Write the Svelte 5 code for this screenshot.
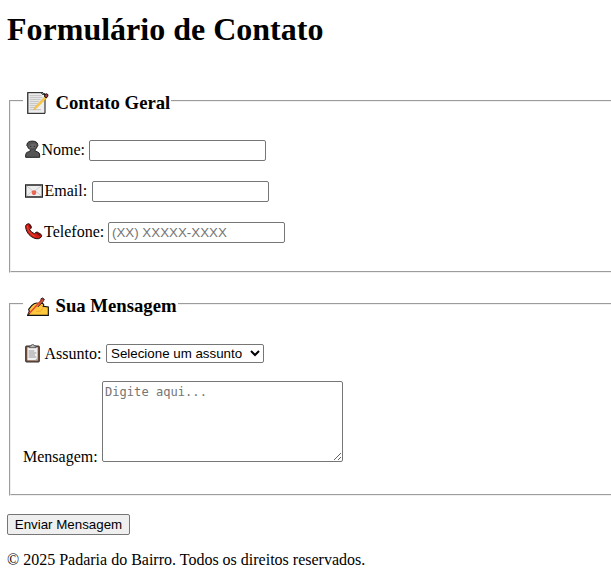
<script>
  let nome = $state('');
  let email = $state('');
  let telefone = $state('');
  let assunto = $state('');
  let mensagem = $state('');
</script>

<main>
  <h1>Formulário de Contato</h1>
  <form onsubmit={(e) => e.preventDefault()}>
    <fieldset class="geral">
      <legend>
        <svg width="22" height="22" viewBox="81 22 66 66">
          <path d="M83 24H129L135 31V86H83Z" fill="#eee" stroke="#111" stroke-width="3" />
          <path d="M83 23V87" stroke="#444" stroke-width="4" />
          <path d="M89 33H125M89 39H127M89 45H122M89 51H117M89 57H113M89 63H109M89 69H105M89 75H123" stroke="#aaa" stroke-width="2" />
          <path d="M101 76L105 67L136 34L141 39L110 70Z" fill="#ffc83d" stroke="#c99a35" stroke-width="1" />
          <path d="M124 25L130 31L136 25" fill="none" stroke="#111" stroke-width="3" />
          <path d="M133 34L139 27L144 30L143 36L138 40Z" fill="#a8454b" stroke="#111" stroke-width="3" />
        </svg>
        <span>Contato Geral</span>
      </legend>
      <div class="row">
        <svg width="16" height="19" viewBox="75 164 48 57">
          <path d="M77 216V208Q78 200 86 199L91 197V192Q84 190 83 184Q79 182 81 177C82 164 112 164 113 177Q116 182 111 184Q110 190 105 193V197L113 200Q119 202 119 209V216Z" fill="#555" stroke="#222" stroke-width="3" />
          <path d="M86 184C87 176 97 174 107 176Q111 186 103 191Q96 196 89 190Z" fill="#666" />
          <circle cx="92" cy="183" r="2" fill="#222" /><circle cx="103" cy="183" r="2" fill="#222" />
          <path d="M92 190Q97 193 103 190" fill="none" stroke="#292929" stroke-width="2" />
        </svg>
        <label class="nome" for="nome">Nome:</label>
        <input id="nome" type="text" bind:value={nome} />
      </div>
      <div class="row">
        <svg width="18" height="14" viewBox="75 56 54 42">
          <path d="M77 59H127V95H77Z" fill="#eee" stroke="#222" stroke-width="4" />
          <path d="M79 61L101 79L125 61M79 93L96 77M125 93L107 77" fill="none" stroke="#bbb" stroke-width="2" />
          <circle cx="102" cy="82" r="7" fill="#ee6b57" />
          <path d="M99 78V80M105 78V80M99 86H105" stroke="#c84b40" stroke-width="2" />
        </svg>
        <label class="email" for="email">Email:</label>
        <input id="email" type="email" bind:value={email} />
      </div>
      <div class="row">
        <svg width="18" height="17" viewBox="75 174 54 51">
          <path d="M80 178L86 176Q91 177 94 185Q95 189 92 191L89 194Q93 202 103 206L108 202Q111 200 115 203L123 208Q127 212 123 217Q117 223 108 221C91 217 79 203 77 187Q76 181 80 178Z" fill="#d51b16" stroke="#211" stroke-width="3" />
          <path d="M82 183Q84 204 106 215" fill="none" stroke="#ed4934" stroke-width="3" />
          <path d="M88 178L92 188M110 204L121 212" stroke="#5e1111" stroke-width="4" />
        </svg>
        <label class="telefone" for="telefone">Telefone:</label>
        <input id="telefone" type="tel" placeholder="(XX) XXXXX-XXXX" bind:value={telefone} />
      </div>
    </fieldset>

    <fieldset class="mensagem">
      <legend>
        <svg width="22" height="20" viewBox="81 37 66 60">
          <path d="M83 92L88 80L86 74L95 63Q103 54 112 55L128 56Q133 60 130 65L145 67V92H95Z" fill="#ffc83d" stroke="#111" stroke-width="3.5" />
          <path d="M108 80H121L130 68M113 60L127 63" fill="none" stroke="#ec992d" stroke-width="2" />
          <path d="M86 88L125 46" stroke="#e94631" stroke-width="5" />
          <path d="M122 43L128 40L133 44L129 51L113 67" fill="#a83b31" stroke="#222" stroke-width="3" />
          <path d="M111 66L130 46" stroke="#ed6147" stroke-width="3" />
          <path d="M83 92L87 84L90 88Z" fill="#222" />
        </svg>
        <span>Sua Mensagem</span>
      </legend>
      <div class="row subject">
        <svg width="15" height="19" viewBox="75 174 45 57">
          <rect x="77" y="180" width="41" height="48" rx="2" fill="#79513e" stroke="#333" stroke-width="3" />
          <path d="M82 184H113V223H82Z" fill="#f1f1f3" />
          <path d="M88 185V180H93Q94 175 98 175Q102 175 103 180H108V185Z" fill="#bbb" stroke="#333" stroke-width="2" />
          <path d="M86 195H103M86 201H109M86 207H105M86 213H109" stroke="#888" stroke-width="2.5" />
          <path d="M105 223L113 215V223Z" fill="#aaa" />
        </svg>
        <label class="assunto" for="assunto">Assunto:</label>
        <select id="assunto" bind:value={assunto}>
          <option value="">Selecione um assunto</option>
          <option value="duvida">Dúvida</option>
          <option value="sugestao">Sugestão</option>
        </select>
      </div>
      <div class="message-row">
        <label for="mensagem">Mensagem:</label>
        <textarea id="mensagem" placeholder="Digite aqui..." bind:value={mensagem}></textarea>
      </div>
    </fieldset>
    <button type="submit">Enviar Mensagem</button>
  </form>
  <footer>© 2025 Padaria do Bairro. Todos os direitos reservados.</footer>
</main>

<style>
  :global(body) { background: #fff; overflow: hidden; }
  main {
    box-sizing: border-box;
    width: 630px;
    padding: 11px 7px 0;
    color: #000;
    font: 16px/18px "Liberation Serif", "Times New Roman", serif;
  }
  h1 { margin: 0; height: 77px; font-size: 32px; line-height: 37px; }
  fieldset {
    box-sizing: border-box;
    margin: 0 2px;
    padding: 0 12px;
    border: 2px groove #f0f0f0;
    min-width: 0;
  }
  .geral { height: 185px; }
  .mensagem { height: 205px; margin-top: 18px; }
  legend {
    display: flex;
    align-items: center;
    box-sizing: border-box;
    height: 26px;
    padding: 0 1px 0 4px;
    font-size: 18.72px;
    font-weight: bold;
    line-height: 22px;
  }
  legend svg { margin-top: 4px; }
  legend span { margin: 4px 0 0 6.5px; white-space: nowrap; }
  .mensagem legend svg { margin-top: 6px; }
  svg { display: block; flex: none; }
  .row { display: flex; align-items: center; height: 41px; padding-left: 2px; }
  .geral .row:first-of-type { margin-top: 16px; }
  .geral .row svg { margin-top: -2px; }
  .geral label { margin-top: -2px; }
  label { flex: none; white-space: nowrap; }
  .nome { width: 47.5px; margin-left: 0.5px; }
  .email { width: 47.5px; margin-left: 1.5px; }
  .telefone { width: 64px; margin-left: 1px; }
  .assunto { width: 61.5px; margin-left: 4.5px; }
  input, select, textarea, button {
    box-sizing: border-box;
    margin: 0;
    border: 1px solid #767676;
    border-radius: 2px;
    color: #000;
    background: #fff;
    font: 13.333px "Liberation Sans", Arial, sans-serif;
  }
  input { width: 177px; height: 21px; padding: 1px 2px; }
  #telefone { padding-left: 3px; }
  input::placeholder, textarea::placeholder { color: #757575; opacity: 1; }
  .subject { height: 41px; margin-top: 16px; }
  select { width: 158px; height: 19px; padding: 0; }
  .message-row { display: flex; align-items: flex-end; margin-top: 7px; }
  .message-row label { width: 79px; margin-bottom: -4px; }
  textarea {
    width: 241px;
    height: 81px;
    padding: 2px;
    font: 12.1px/17px "DejaVu Sans Mono", monospace;
    resize: both;
  }
  button { display: block; width: 123px; height: 21px; margin-top: 18px; padding: 0; background: #efefef; white-space: nowrap; }
  footer { margin-top: 16px; }
</style>
